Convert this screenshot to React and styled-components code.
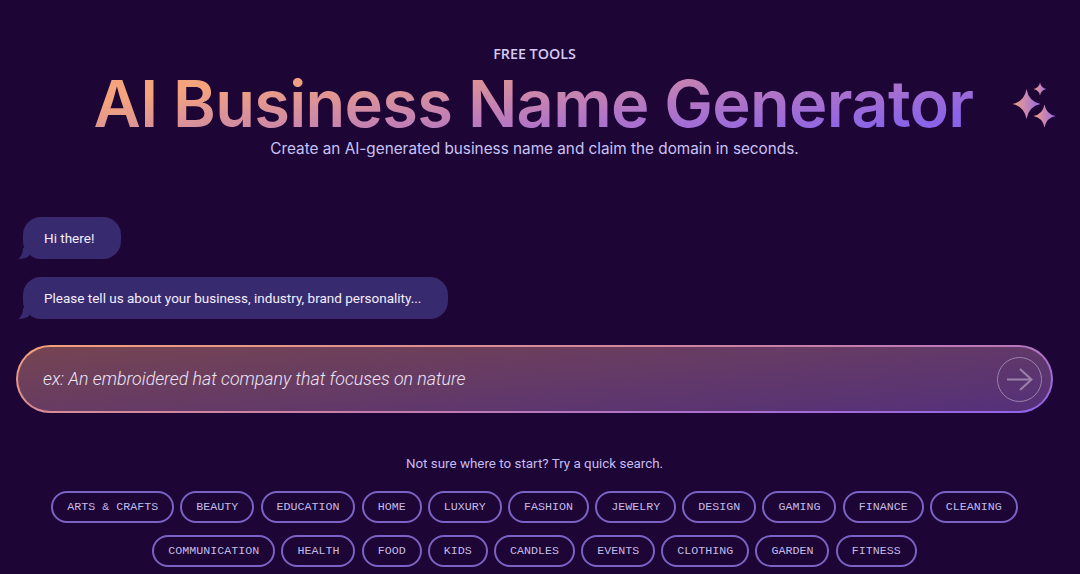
import React from "react";
import styled, { createGlobalStyle } from "styled-components";

const GlobalStyle = createGlobalStyle`
  html, body {
    margin: 0;
    height: 574px;
    overflow: hidden;
    background: #1d0536;
  }
  * { box-sizing: border-box; }
`;

const Page = styled.main`
  padding: 44px 27px 0 16px;
  font-family: Roboto, sans-serif;
`;

const Hero = styled.header`
  display: flex;
  flex-direction: column;
  align-items: center;
`;

const Eyebrow = styled.div`
  font-family: "Open Sans", sans-serif;
  font-size: 14.3px;
  font-weight: 600;
  line-height: 19px;
  color: #d5cbf5;
`;

const TitleWrap = styled.div`
  position: relative;
  margin: 6px 2px 0 0;
`;

const Title = styled.h1`
  margin: 0;
  font-family: Inter, sans-serif;
  font-size: 65px;
  font-weight: 600;
  line-height: 69px;
  letter-spacing: -0.72px;
  white-space: nowrap;
  background: linear-gradient(172deg, #f4a37c 18%, #b476c4 60%, #8a63e8 88%);
  -webkit-background-clip: text;
  background-clip: text;
  color: transparent;
`;

const SparkleIcon = styled.svg`
  position: absolute;
  left: calc(100% + 39px);
  top: 13px;
`;

const Subtitle = styled.p`
  margin: 0;
  font-family: Inter, sans-serif;
  font-size: 15.3px;
  line-height: 22px;
  color: #c9c3f5;
`;

const Chat = styled.section`
  display: flex;
  flex-direction: column;
  align-items: flex-start;
  gap: 18px;
  margin: 57px 0 0 7px;
`;

const Bubble = styled.div`
  position: relative;
  height: 42px;
  padding: 0 27px 0 21px;
  display: flex;
  align-items: center;
  border-radius: 18px;
  background: #382a6f;
  font-size: 13.5px;
  color: #f3eefc;

  &::before {
    content: "";
    position: absolute;
    left: -5px;
    bottom: 0;
    width: 14px;
    height: 11px;
    background: #382a6f;
    clip-path: path("M5 0 C5 5 3 9 0 11 C5 11 9 10 11 8 L14 0 Z");
  }
`;

const InputRow = styled.form`
  height: 68px;
  margin-top: 26px;
  padding: 0 9px 0 25px;
  display: flex;
  align-items: center;
  justify-content: space-between;
  border: 2px solid transparent;
  border-radius: 34px;
  background:
    linear-gradient(175deg, #754452 0%, #54307a 100%) padding-box,
    linear-gradient(172deg, #f4a277 0%, #c77fa8 52%, #8f63ee 100%) border-box;
`;

const Placeholder = styled.span`
  font-size: 17.75px;
  font-style: italic;
  font-weight: 300;
  color: #ebe5f5;
`;

const SendButton = styled.button`
  width: 45px;
  height: 45px;
  padding: 0;
  display: flex;
  align-items: center;
  justify-content: center;
  border: 1.5px solid #9a82ad;
  border-radius: 50%;
  background: transparent;
`;

const QuickSearch = styled.section`
  margin-top: 43px;
  display: flex;
  flex-direction: column;
  align-items: center;
`;

const Hint = styled.p`
  margin: 0;
  font-size: 13.4px;
  line-height: 16px;
  color: #c4bcf0;
`;

const PillRow = styled.div`
  display: flex;
  justify-content: center;
  gap: 6.2px;
  margin-top: ${(p) => p.$top}px;
`;

const Pill = styled.button`
  height: 32px;
  padding: 0 14px;
  border: 2px solid #7a63c4;
  border-radius: 16px;
  background: transparent;
  font-family: "Liberation Mono", monospace;
  font-size: 11.67px;
  color: #c4bce8;
  white-space: nowrap;
`;

const rowOne = ["ARTS & CRAFTS", "BEAUTY", "EDUCATION", "HOME", "LUXURY", "FASHION", "JEWELRY", "DESIGN", "GAMING", "FINANCE", "CLEANING"];
const rowTwo = ["COMMUNICATION", "HEALTH", "FOOD", "KIDS", "CANDLES", "EVENTS", "CLOTHING", "GARDEN", "FITNESS"];

// four point star, k pulls the waist in towards the centre
const starPath = (x, y, rx, ry, k = 0.16) =>
  `M${x} ${y - ry} Q${x + rx * k} ${y - ry * k} ${x + rx} ${y} Q${x + rx * k} ${y + ry * k} ${x} ${y + ry} Q${x - rx * k} ${y + ry * k} ${x - rx} ${y} Q${x - rx * k} ${y - ry * k} ${x} ${y - ry} Z`;

function Sparkles() {
  return (
    <SparkleIcon width="44" height="46" viewBox="0 0 44 46">
      <defs>
        <linearGradient id="spark" x1="0" y1="0.5" x2="1" y2="0.5">
          <stop offset="0" stopColor="#f4a37c" />
          <stop offset="1" stopColor="#9a68ea" />
        </linearGradient>
      </defs>
      <path fill="url(#spark)" d={starPath(14.5, 22, 14, 15)} />
      <path fill="url(#spark)" d={starPath(28, 7, 6.5, 6.5)} />
      <path fill="url(#spark)" d={starPath(32.5, 34, 11, 11.5)} />
    </SparkleIcon>
  );
}

export default function App() {
  return (
    <>
      <GlobalStyle />
      <Page>
        <Hero>
          <Eyebrow>FREE TOOLS</Eyebrow>
          <TitleWrap>
            <Title>AI Business Name Generator</Title>
            <Sparkles />
          </TitleWrap>
          <Subtitle>Create an AI-generated business name and claim the domain in seconds.</Subtitle>
        </Hero>
        <Chat>
          <Bubble>Hi there!</Bubble>
          <Bubble>Please tell us about your business, industry, brand personality...</Bubble>
        </Chat>
        <InputRow>
          <Placeholder>ex: An embroidered hat company that focuses on nature</Placeholder>
          <SendButton type="button" aria-label="Submit">
            <svg width="27" height="23" viewBox="0 0 27 23" fill="none" stroke="#9a82ad" strokeWidth="2">
              <path d="M1 11.5 H25" />
              <path d="M14 1 L25.5 11.5 L14 22" />
            </svg>
          </SendButton>
        </InputRow>
        <QuickSearch>
          <Hint>Not sure where to start? Try a quick search.</Hint>
          <PillRow $top={19}>
            {rowOne.map((label) => (
              <Pill key={label}>{label}</Pill>
            ))}
          </PillRow>
          <PillRow $top={12}>
            {rowTwo.map((label) => (
              <Pill key={label}>{label}</Pill>
            ))}
          </PillRow>
        </QuickSearch>
      </Page>
    </>
  );
}
